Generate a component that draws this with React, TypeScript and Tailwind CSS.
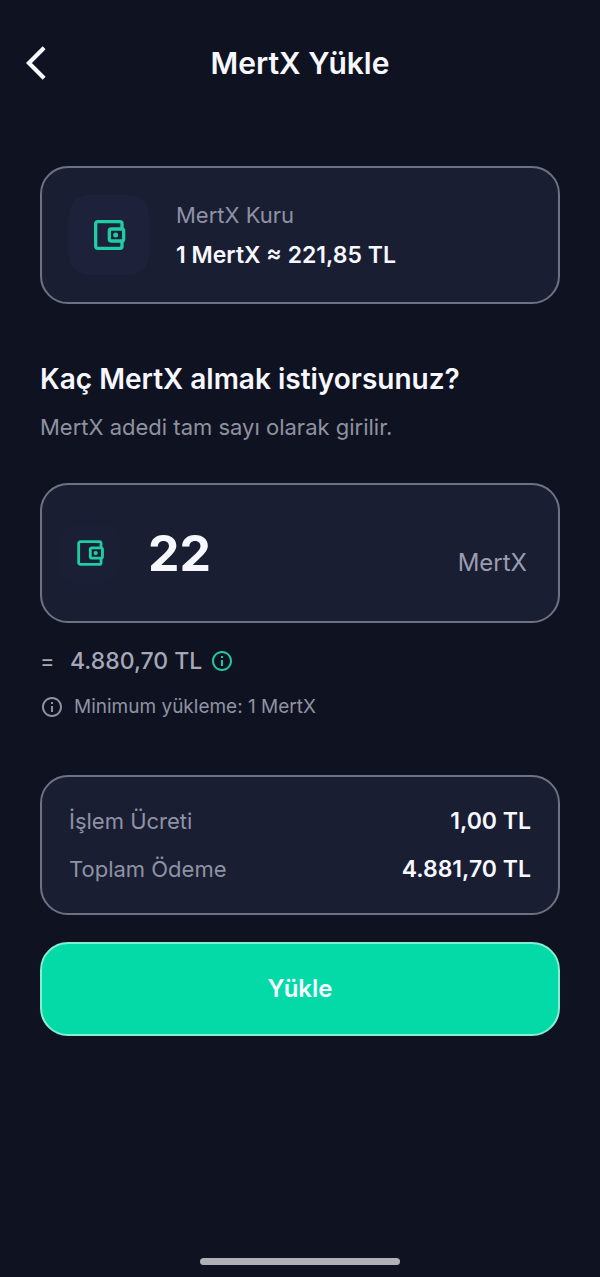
import { useState } from 'react';
import type { ReactNode } from 'react';
import { MdArrowBackIosNew, MdInfoOutline } from 'react-icons/md';

const RATE = 221.85;
const FEE = 1;

const formatTL = (value: number) =>
  `${value.toLocaleString('tr-TR', { minimumFractionDigits: 2, maximumFractionDigits: 2 })} TL`;

function WalletIcon({ className }: { className: string }) {
  return (
    <svg viewBox="0 0 24 24" fill="none" stroke="currentColor" strokeWidth="2" className={className} aria-hidden="true">
      <path d="M19.8 8V5.2A1.2 1.2 0 0 0 18.6 4H5.2A1.2 1.2 0 0 0 4 5.2v13.6A1.2 1.2 0 0 0 5.2 20h13.4a1.2 1.2 0 0 0 1.2-1.2V16" />
      <rect x="12.2" y="8.4" width="8.6" height="7.2" rx="1.2" />
      <circle cx="16" cy="12" r="1.5" fill="currentColor" stroke="none" />
    </svg>
  );
}

function Card({ className, children }: { className: string; children: ReactNode }) {
  return <div className={`rounded-[28px] border-2 border-[#6f7182] bg-[#1a1e32] ${className}`}>{children}</div>;
}

function SummaryRow({ label, value }: { label: string; value: string }) {
  return (
    <div className="flex items-center justify-between gap-4">
      <dt className="text-[22px] text-[#8f92a5]">{label}</dt>
      <dd className="text-[23px] font-semibold">{value}</dd>
    </div>
  );
}

export default function App() {
  const [amount, setAmount] = useState('22');
  const cost = Number(amount) * RATE;

  return (
    <div className="flex min-h-screen flex-col bg-[#0f1220] font-['Inter',sans-serif] text-[#f7f8ff]">
      <header className="grid grid-cols-[40px_1fr_40px] items-center px-4 pt-[39px]">
        <button type="button" aria-label="Geri" className="size-10">
          <MdArrowBackIosNew className="size-10" />
        </button>
        <h1 className="text-center text-[30px] leading-12 font-semibold">MertX Yükle</h1>
      </header>

      <main className="flex flex-col px-10 pt-[79px]">
        <Card className="flex items-center gap-[27px] p-[27px]">
          <div className="flex size-20 shrink-0 items-center justify-center rounded-[20px] bg-[#1e213a]">
            <WalletIcon className="size-10 text-[#1fcca4]" />
          </div>
          <div>
            <p className="text-[22px] leading-10 text-[#8f92a5]">MertX Kuru</p>
            <p className="text-[23px] leading-10 font-semibold">1 MertX ≈ {formatTL(RATE)}</p>
          </div>
        </Card>

        <h2 className="mt-[55px] text-[28px] leading-10 font-semibold">Kaç MertX almak istiyorsunuz?</h2>
        <label htmlFor="amount" className="mt-2 text-[22px] leading-10 text-[#8f92a0]">
          MertX adedi tam sayı olarak girilir.
        </label>

        <Card className="mt-9 flex items-center gap-7 py-9 pr-[31px] pl-[18px]">
          <div className="flex size-15 shrink-0 items-center justify-center rounded-2xl bg-[#1b1f36]">
            <WalletIcon className="size-[34px] text-[#1fcca4]" />
          </div>
          <input
            id="amount"
            type="text"
            inputMode="numeric"
            value={amount}
            onChange={(e) => setAmount(e.target.value.replace(/\D/g, ''))}
            className="h-16 w-full min-w-0 flex-1 bg-transparent text-[50px] font-bold outline-none"
          />
          <span className="pt-5 text-2xl text-[#9a9daf]">MertX</span>
        </Card>

        <div className="mt-5 flex items-center text-[#a6a8b8]">
          <span className="w-[30px] text-[22px]">=</span>
          <output htmlFor="amount" className="text-[23px] leading-9 font-medium">
            {formatTL(cost)}
          </output>
          <button type="button" aria-label="Kur bilgisi" className="ml-2 text-[#22c99f]">
            <MdInfoOutline className="size-6" />
          </button>
        </div>
        <p className="mt-[10px] flex items-center gap-[10px] text-[19px] leading-9 text-[#8f92a5]">
          <MdInfoOutline className="size-6" />
          Minimum yükleme: 1 MertX
        </p>

        <Card className="mt-[50px] px-[27px] py-5">
          <dl className="flex flex-col leading-12">
            <SummaryRow label="İşlem Ücreti" value={formatTL(FEE)} />
            <SummaryRow label="Toplam Ödeme" value={formatTL(cost + FEE)} />
          </dl>
        </Card>

        <button
          type="button"
          className="mt-[27px] h-[94px] rounded-[28px] border-2 border-[#84edd2] bg-[#04daa8] text-2xl font-semibold"
        >
          Yükle
        </button>
      </main>

      <div className="mx-auto mt-auto mb-3 h-[7px] w-1/3 rounded-full bg-[#afb1b7]" />
    </div>
  );
}
